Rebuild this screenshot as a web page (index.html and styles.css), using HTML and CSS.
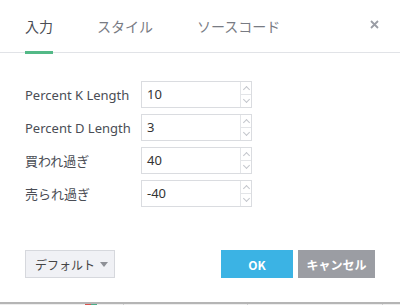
FILE: index.html
```html
<!DOCTYPE html>
<html lang="ja">
<head>
    <meta charset="UTF-8">
    <title>インジケーター設定</title>
    <link rel="stylesheet" href="styles.css">
</head>
<body>
    <div class="dialog">
        <div class="head">
            <div class="tabs">
                <span class="tab current">入力</span>
                <span class="tab">スタイル</span>
                <span class="tab">ソースコード</span>
            </div>
            <span class="close">
                <svg width="9" height="9" viewBox="0 0 9 9"><path d="M1 1L8 8M8 1L1 8" stroke="#9a9da5" stroke-width="1.8" fill="none"/></svg>
            </span>
        </div>
        <div class="form">
            <div class="row">
                <label>Percent K Length</label>
                <div class="num"><span class="val">10</span><span class="spin"><i class="up"></i><i class="down"></i></span></div>
            </div>
            <div class="row">
                <label>Percent D Length</label>
                <div class="num"><span class="val">3</span><span class="spin"><i class="up"></i><i class="down"></i></span></div>
            </div>
            <div class="row">
                <label>買われ過ぎ</label>
                <div class="num"><span class="val">40</span><span class="spin"><i class="up"></i><i class="down"></i></span></div>
            </div>
            <div class="row">
                <label>売られ過ぎ</label>
                <div class="num"><span class="val">-40</span><span class="spin"><i class="up"></i><i class="down"></i></span></div>
            </div>
        </div>
        <div class="foot">
            <span class="btn-default">デフォルト<b class="caret"></b></span>
            <div class="btns">
                <span class="btn ok">OK</span>
                <span class="btn cancel">キャンセル</span>
            </div>
        </div>
    </div>
    <div class="chart-edge"></div>
    <div class="chart">
        <span class="bar red"></span>
        <span class="bar green"></span>
        <span class="tick t1"></span>
        <span class="tick t2"></span>
        <span class="tick t3"></span>
    </div>
</body>
</html>
```

FILE: styles.css
```css
*{
    padding: 0;
    margin: 0;
    box-sizing: border-box;
}
body {
    width: 400px;
    height: 305px;
    overflow: hidden;
    background: #fff;
    font-family: "Noto Sans", "Noto Sans CJK JP", sans-serif;
    color: #4a4d55;
}
.dialog {
    height: 302px;
    display: flex;
    flex-direction: column;
}
.head {
    height: 53px;
    border-bottom: 1px solid #e1e3e7;
    display: flex;
    justify-content: space-between;
    padding: 0 21px 0 25px;
}
.tabs {
    display: flex;
    gap: 44px;
}
.tab {
    height: 54px;
    margin-bottom: -2px;
    display: flex;
    align-items: center;
    font-family: "Noto Sans CJK JP", sans-serif;
    font-size: 14px;
    color: #787b83;
    border-bottom: 3px solid transparent;
}
.tab.current {
    color: #4a4d55;
    border-bottom-color: #53b987;
}
.close {
    display: flex;
    align-items: center;
    height: 48px;
}
.close svg {
    display: block;
}
.form {
    padding: 28px 0 0 25px;
    display: flex;
    flex-direction: column;
    gap: 6px;
}
.row {
    display: flex;
    align-items: center;
    height: 27px;
}
.row label {
    width: 116px;
    font-size: 13px;
    color: #4a4d55;
    font-family: "Noto Sans", "Noto Sans CJK JP", sans-serif;
}
.num {
    width: 111px;
    height: 27px;
    border: 1px solid #dadce0;
    display: flex;
}
.val {
    flex: 1;
    padding-left: 5px;
    font-size: 13px;
    line-height: 25px;
    color: #333;
}
.spin {
    width: 11px;
    border-left: 1px solid #e3e5e8;
    display: flex;
    flex-direction: column;
}
.spin i {
    flex: 1;
    display: flex;
    align-items: center;
    justify-content: center;
}
.spin i.up {
    border-bottom: 1px solid #e3e5e8;
}
.spin i::before {
    content: "";
    width: 4px;
    height: 4px;
    border-left: 1px solid #c3c6cc;
    border-top: 1px solid #c3c6cc;
    transform: rotate(45deg);
    margin-top: 3px;
}
.spin i.down::before {
    transform: rotate(225deg);
    margin-top: -3px;
}
.foot {
    margin-top: auto;
    margin-bottom: 24px;
    padding: 0 25px;
    display: flex;
    justify-content: space-between;
}
.btn-default {
    width: 90px;
    height: 28px;
    background: #f0f1f5;
    border: 1px solid #d6d8dd;
    display: flex;
    align-items: center;
    padding-left: 9px;
    white-space: nowrap;
    font-family: "Noto Sans CJK JP", sans-serif;
    font-size: 12px;
    color: #444;
}
.caret {
    margin-left: 5px;
    width: 0;
    height: 0;
    border-left: 4px solid transparent;
    border-right: 4px solid transparent;
    border-top: 5px solid #8e9096;
}
.btns {
    display: flex;
    gap: 5px;
}
.btn {
    height: 28px;
    display: flex;
    align-items: center;
    justify-content: center;
    color: #fff;
    font-weight: bold;
    font-family: "Noto Sans CJK JP", sans-serif;
    font-size: 12px;
}
.ok {
    width: 72px;
    background: #3bb3e4;
}
.cancel {
    width: 77px;
    background: #9b9da3;
}
.chart-edge {
    height: 2px;
    background: #b5b5b5;
}
.chart {
    height: 1px;
    background: #eeeeee;
    display: flex;
}
.bar {
    width: 6px;
    height: 1px;
}
.red {
    margin-left: 85px;
    background: #d9534f;
}
.green {
    background: #4caf8a;
}
.tick {
    width: 1px;
    height: 1px;
    background: #cfcfcf;
}
.t1 { margin-left: 26px; }
.t2 { margin-left: 123px; }
.t3 { margin-left: 134px; }
```
